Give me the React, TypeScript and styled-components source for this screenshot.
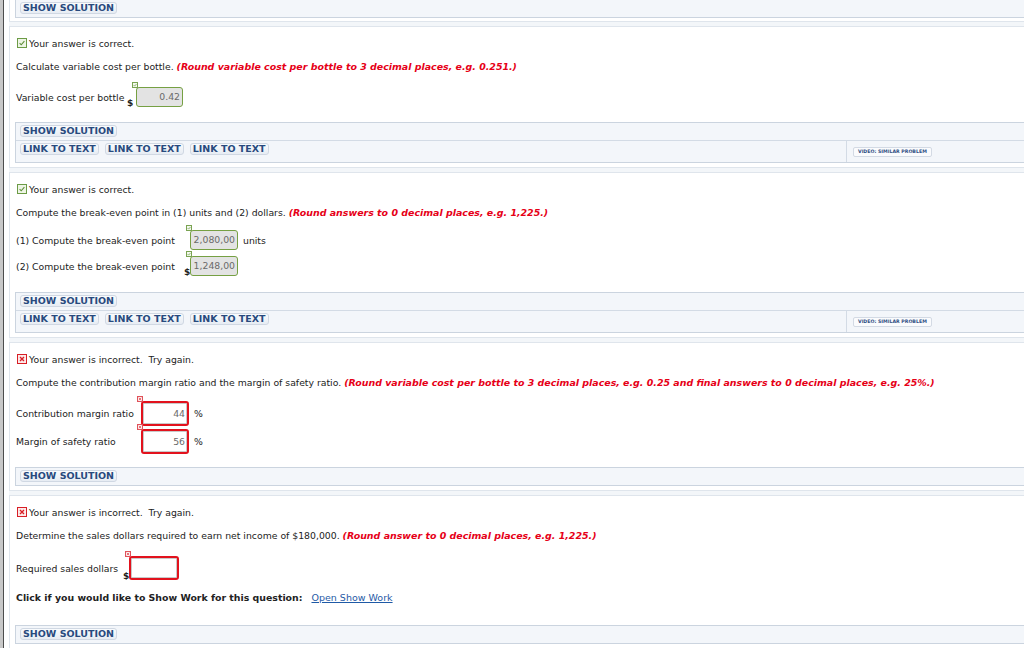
import styled, { createGlobalStyle } from 'styled-components';

const GlobalStyle = createGlobalStyle`
  html, body { margin: 0; padding: 0; background: #fff; }
  body {
    font-family: "DejaVu Sans", Verdana, sans-serif;
    font-size: 9.3px;
    color: #222;
  }
`;

const Page = styled.div`
  display: flex;
  height: 648px;
  overflow: hidden;
`;

const Edge = styled.div`
  width: 3px;
  flex-shrink: 0;
  background: #c8c8c8;
  border-right: 1px solid #4d4d4d;
`;

const Column = styled.div`
  flex: 1;
  padding-left: 5px;
  background: #fff;
`;

const Stack = styled.div`
  display: flex;
  flex-direction: column;
  gap: 4px;
  margin-top: -1px;
  background: #f3f6f9;
`;

const Panel = styled.section<{ $top?: boolean }>`
  background: #fff;
  border: 1px solid #dfe5ec;
  border-right: none;
  border-top: ${p => (p.$top ? 'none' : '1px solid #dfe5ec')};
  padding: 0 0 ${p => (p.$top ? 3 : 4)}px 0;
`;

const Feedback = styled.div`
  display: flex;
  align-items: center;
  gap: 2px;
  height: 12px;
  margin: 10px 0 0 7px;
`;

const Question = styled.div`
  height: 12px;
  line-height: 12px;
  margin: 12px 0 0 6px;
  white-space: nowrap;
`;

const Hint = styled.span`
  color: #e60017;
  font-weight: bold;
  font-style: italic;
  font-size: 9.45px;
`;

const Fields = styled.div<{ $mt: number; $gap: number }>`
  display: flex;
  flex-direction: column;
  gap: ${p => p.$gap}px;
  margin: ${p => p.$mt}px 0 0 6px;
`;

const Row = styled.div`
  display: flex;
  align-items: center;
`;

const Label = styled.div<{ $w: number }>`
  width: ${p => p.$w}px;
  flex-shrink: 0;
  white-space: nowrap;
`;

const Dollar = styled.div<{ $w: number }>`
  width: ${p => p.$w}px;
  align-self: flex-end;
  font-weight: bold;
  font-size: 9px;
  line-height: 9px;
  margin-bottom: -1px;
`;

const InputWrap = styled.div`
  position: relative;
`;

const Box = styled.div<{ $bad?: boolean; $w: number; $h: number }>`
  width: ${p => p.$w}px;
  height: ${p => p.$h}px;
  box-sizing: border-box;
  border: ${p => (p.$bad ? '2px solid #e2121d' : '1px solid #76a043')};
  border-radius: 3px;
  background: ${p => (p.$bad ? '#fff' : '#e3e3e3')};
  box-shadow: ${p => (p.$bad ? 'inset 0 0 0 1px #c9c9c9' : 'none')};
  color: #6a6a6a;
  font-size: 9.3px;
  line-height: ${p => p.$h - (p.$bad ? 4 : 2)}px;
  text-align: right;
  padding: 0 2px 0 1px;
  white-space: nowrap;
  overflow: hidden;
`;

const Marker = styled.div`
  position: absolute;
  left: -4px;
  top: -5px;
  width: 6px;
  height: 6px;
  line-height: 0;
`;

const Unit = styled.span`
  margin-left: 5px;
`;

const Solution = styled.div<{ $mt: number }>`
  margin: ${p => p.$mt}px 0 0 5px;
  background: #f3f6fa;
  border: 1px solid #cbd4df;
  border-right: none;
`;

const SolRow = styled.div`
  height: 17px;
  display: flex;
  align-items: flex-start;
  padding: 2px 0 0 4px;
  box-sizing: border-box;
`;

const LinkRow = styled.div`
  height: 21px;
  display: flex;
  border-top: 1px solid #d3dbe5;
`;

const LinkCell = styled.div`
  width: 826px;
  display: flex;
  gap: 6px;
  padding: 2px 0 0 4px;
`;

const VideoCell = styled.div`
  flex: 1;
  border-left: 1px solid #d3dbe5;
  padding: 3px 0 0 6px;
`;

const Btn = styled.span`
  display: inline-block;
  height: 12px;
  padding: 0 2px;
  box-sizing: border-box;
  border: 1px solid #d0d8e3;
  border-radius: 3px;
  background: linear-gradient(#f9fbfd, #e7ecf3);
  color: #284a7e;
  font-weight: bold;
  font-size: 9.5px;
  line-height: 10px;
  white-space: nowrap;
`;

const VideoBtn = styled.span`
  display: inline-block;
  height: 10px;
  line-height: 8px;
  padding: 0 4px;
  box-sizing: border-box;
  border: 1px solid #d3dae4;
  border-radius: 2px;
  background: #fafbfd;
  color: #2f4f84;
  font-weight: bold;
  font-size: 4.7px;
  white-space: nowrap;
`;

const ShowWork = styled.div`
  margin: 12px 0 0 6px;
  height: 12px;
  line-height: 12px;
  font-weight: bold;
  font-size: 9.4px;
  white-space: nowrap;
  a {
    font-weight: normal;
    color: #1f5aa6;
    text-decoration: underline;
    margin-left: 9px;
    font-size: 9.5px;
  }
`;

const StatusIcon = ({ ok }: { ok: boolean }) => (
  <svg width="10" height="10" viewBox="0 0 10 10">
    <rect x="0.5" y="0.5" width="9" height="9" fill={ok ? '#eef5e6' : '#fde9e9'} stroke={ok ? '#6c9b45' : '#d81e25'} />
    {ok ? (
      <path d="M2.6 5.2 L4.2 6.8 L7.4 3.2" fill="none" stroke="#5f8f3a" strokeWidth="1.1" />
    ) : (
      <path d="M3 3 L7 7 M7 3 L3 7" fill="none" stroke="#d81e25" strokeWidth="1.3" />
    )}
  </svg>
);

const SmallMark = ({ ok }: { ok: boolean }) => (
  <Marker>
    <svg width="6" height="6" viewBox="0 0 6 6">
      <rect x="0.5" y="0.5" width="5" height="5" fill={ok ? '#f3f8ee' : '#fdeeee'} stroke={ok ? '#7aa352' : '#e0525a'} />
      {ok ? (
        <path d="M1.6 3.1 L2.6 4.1 L4.5 2" fill="none" stroke="#6c9b45" strokeWidth="0.7" />
      ) : (
        <path d="M1.8 1.8 L4.2 4.2 M4.2 1.8 L1.8 4.2" fill="none" stroke="#e0525a" strokeWidth="0.8" />
      )}
    </svg>
  </Marker>
);

type FieldProps = {
  label: string;
  labelW: number;
  dollar?: boolean;
  slotW: number;
  value: string;
  ok: boolean;
  w: number;
  h: number;
  unit?: string;
};

const Field = ({ label, labelW, dollar, slotW, value, ok, w, h, unit }: FieldProps) => (
  <Row>
    <Label $w={labelW}>{label}</Label>
    <Dollar $w={slotW}>{dollar ? '$' : ''}</Dollar>
    <InputWrap>
      <SmallMark ok={ok} />
      <Box $bad={!ok} $w={w} $h={h}>{value}</Box>
    </InputWrap>
    {unit && <Unit>{unit}</Unit>}
  </Row>
);

const Links = () => (
  <LinkRow>
    <LinkCell>
      <Btn>LINK TO TEXT</Btn>
      <Btn>LINK TO TEXT</Btn>
      <Btn>LINK TO TEXT</Btn>
    </LinkCell>
    <VideoCell>
      <VideoBtn>VIDEO: SIMILAR PROBLEM</VideoBtn>
    </VideoCell>
  </LinkRow>
);

const Status = ({ ok }: { ok: boolean }) => (
  <Feedback>
    <StatusIcon ok={ok} />
    <span>{ok ? 'Your answer is correct.' : 'Your answer is incorrect.\u00a0 Try again.'}</span>
  </Feedback>
);

export default function App() {
  return (
    <>
      <GlobalStyle />
      <Page>
        <Edge />
        <Column>
          <Stack>
            <Panel $top>
              <Solution $mt={0}>
                <SolRow><Btn>SHOW SOLUTION</Btn></SolRow>
              </Solution>
            </Panel>

            <Panel>
              <Status ok />
              <Question>
                Calculate variable cost per bottle. <Hint>(Round variable cost per bottle to 3 decimal places, e.g. 0.251.)</Hint>
              </Question>
              <Fields $mt={14} $gap={0}>
                <Field label="Variable cost per bottle" labelW={111} dollar slotW={9} value="0.42" ok w={47} h={20} />
              </Fields>
              <Solution $mt={15}>
                <SolRow><Btn>SHOW SOLUTION</Btn></SolRow>
                <Links />
              </Solution>
            </Panel>

            <Panel>
              <Status ok />
              <Question>
                Compute the break-even point in (1) units and (2) dollars. <Hint>(Round answers to 0 decimal places, e.g. 1,225.)</Hint>
              </Question>
              <Fields $mt={11} $gap={6}>
                <Field label="(1) Compute the break-even point" labelW={168} slotW={6} value="2,080,00" ok w={48} h={20} unit="units" />
                <Field label="(2) Compute the break-even point" labelW={168} dollar slotW={6} value="1,248,00" ok w={48} h={20} />
              </Fields>
              <Solution $mt={16}>
                <SolRow><Btn>SHOW SOLUTION</Btn></SolRow>
                <Links />
              </Solution>
            </Panel>

            <Panel>
              <Status ok={false} />
              <Question>
                Compute the contribution margin ratio and the margin of safety ratio. <Hint>(Round variable cost per bottle to 3 decimal places, e.g. 0.25 and final answers to 0 decimal places, e.g. 25%.)</Hint>
              </Question>
              <Fields $mt={12} $gap={3}>
                <Field label="Contribution margin ratio" labelW={125} slotW={0} value="44" ok={false} w={48} h={25} unit="%" />
                <Field label="Margin of safety ratio" labelW={125} slotW={0} value="56" ok={false} w={48} h={25} unit="%" />
              </Fields>
              <Solution $mt={13}>
                <SolRow><Btn>SHOW SOLUTION</Btn></SolRow>
              </Solution>
            </Panel>

            <Panel>
              <Status ok={false} />
              <Question>
                Determine the sales dollars required to earn net income of $180,000. <Hint>(Round answer to 0 decimal places, e.g. 1,225.)</Hint>
              </Question>
              <Fields $mt={14} $gap={0}>
                <Field label="Required sales dollars" labelW={107} dollar slotW={6} value="" ok={false} w={50} h={24} />
              </Fields>
              <ShowWork>
                Click if you would like to Show Work for this question:<a href="#">Open Show Work</a>
              </ShowWork>
              <Solution $mt={21}>
                <SolRow><Btn>SHOW SOLUTION</Btn></SolRow>
              </Solution>
            </Panel>
          </Stack>
        </Column>
      </Page>
    </>
  );
}
